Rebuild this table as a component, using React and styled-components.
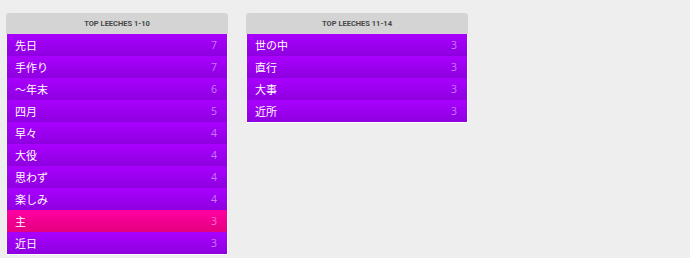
import React from "react";
import styled, { createGlobalStyle } from "styled-components";

const GlobalStyle = createGlobalStyle`
  body {
    margin: 0;
    background: #eeeeee;
    font-family: "Open Sans", "Noto Sans CJK JP", sans-serif;
  }
`;

const Page = styled.div`
  display: flex;
  align-items: flex-start;
  gap: 18px;
  padding: 13px 0 0 6px;
`;

const Panel = styled.div`
  width: 222px;
  background: #ffffff;
  border-radius: 3px 3px 0 0;
  padding: 0 1px 1px;
  box-sizing: border-box;
`;

const Header = styled.div`
  height: 21px;
  margin: 0 -1px;
  background: #d4d4d4;
  border-radius: 3px 3px 0 0;
  display: flex;
  align-items: center;
  justify-content: center;
  font-family: Roboto, sans-serif;
  font-size: 7.5px;
  font-weight: 700;
  color: #474747;
  text-transform: uppercase;
`;

const Row = styled.div`
  height: 22px;
  display: flex;
  align-items: center;
  justify-content: space-between;
  padding: 0 10px 0 8px;
  background: ${(p) =>
    p.$hot
      ? "linear-gradient(#ff00a2, #e4007f)"
      : "linear-gradient(#a900ff, #8e00df)"};
`;

const Word = styled.span`
  font-family: "Noto Sans CJK JP", sans-serif;
  font-size: 11px;
  color: #ffffff;
`;

const Count = styled.span`
  font-family: "Open Sans", sans-serif;
  font-size: 10.5px;
  color: ${(p) => (p.$hot ? "#ff70c8" : "#c47cff")};
`;

const first = [
  ["先日", 7],
  ["手作り", 7],
  ["〜年末", 6],
  ["四月", 5],
  ["早々", 4],
  ["大役", 4],
  ["思わず", 4],
  ["楽しみ", 4],
  ["主", 3, true],
  ["近日", 3],
];

const second = [
  ["世の中", 3],
  ["直行", 3],
  ["大事", 3],
  ["近所", 3],
];

const Leeches = ({ title, items }) => (
  <Panel>
    <Header>{title}</Header>
    {items.map(([word, n, hot]) => (
      <Row key={word} $hot={hot}>
        <Word>{word}</Word>
        <Count $hot={hot}>{n}</Count>
      </Row>
    ))}
  </Panel>
);

export default function App() {
  return (
    <>
      <GlobalStyle />
      <Page>
        <Leeches title="Top Leeches 1-10" items={first} />
        <Leeches title="Top Leeches 11-14" items={second} />
      </Page>
    </>
  );
}
